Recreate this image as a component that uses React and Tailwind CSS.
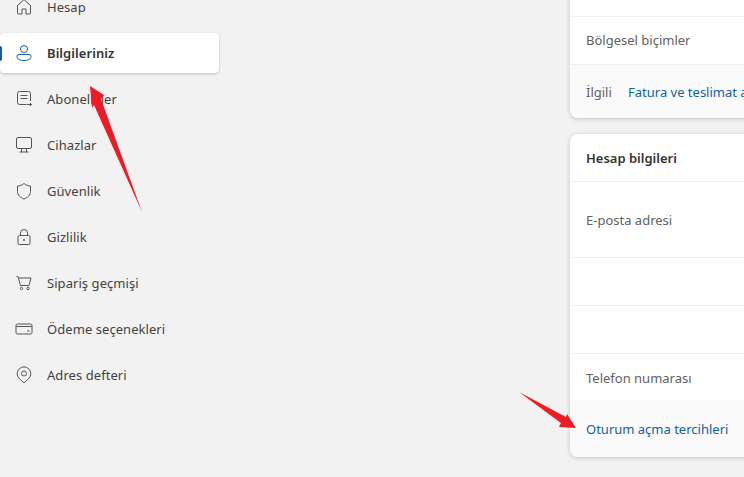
const navItems = [
  { label: 'Hesap', icon: HomeIcon },
  { label: 'Bilgileriniz', icon: PersonIcon, active: true },
  { label: 'Abonelikler', icon: SubsIcon },
  { label: 'Cihazlar', icon: DeviceIcon },
  { label: 'Güvenlik', icon: ShieldIcon },
  { label: 'Gizlilik', icon: LockIcon },
  { label: 'Sipariş geçmişi', icon: CartIcon },
  { label: 'Ödeme seçenekleri', icon: CardIcon },
  { label: 'Adres defteri', icon: PinIcon },
];

function Svg({ children, className = 'text-[#555555]' }) {
  return (
    <svg width="18" height="18" viewBox="0 0 18 18" fill="none" stroke="currentColor" strokeWidth="1" className={className}>
      {children}
    </svg>
  );
}

function HomeIcon() {
  return <Svg><path d="M2.500 7.500 9 1.500l6.500 6V15a1 1 0 0 1-1 1h-3.500v-5H7v5H3.500a1 1 0 0 1-1-1z" strokeLinejoin="round" /></Svg>;
}
function PersonIcon() {
  return <Svg className="text-[#115ea3]"><circle cx="9" cy="5" r="3.500" /><path d="M4 10.500h10a2 2 0 0 1 2 2c0 2.500-3 4-7 4s-7-1.500-7-4a2 2 0 0 1 2-2z" /></Svg>;
}
function SubsIcon() {
  return <Svg><path d="M15.500 11V3.500a2 2 0 0 0-2-2h-9a2 2 0 0 0-2 2v9a2 2 0 0 0 2 2H11" /><path d="M5.500 5.500h7M5.500 8.500h7M11.500 14.500h5M15 13l1.500 1.500L15 16" /></Svg>;
}
function DeviceIcon() {
  return <Svg><rect x="1.500" y="1.500" width="15" height="11" rx="1.500" /><path d="M6.500 12.500v3.500M11.500 12.500v3.500M4.500 16h9" /></Svg>;
}
function ShieldIcon() {
  return <Svg><path d="M9 1.500c2 1.600 4 2.400 6.500 2.500v5.500c0 3.500-2.500 6-6.500 7.500-4-1.500-6.500-4-6.500-7.500V4C5 3.900 7 3.100 9 1.500z" strokeLinejoin="round" /></Svg>;
}
function LockIcon() {
  return <Svg><rect x="3" y="7.500" width="12" height="9" rx="1.500" /><path d="M5.500 7.500V5a3.500 3.500 0 0 1 7 0v2.500" /><circle cx="9" cy="12" r="1" fill="currentColor" stroke="none" /></Svg>;
}
function CartIcon() {
  return <Svg><path d="M1.500 2.500h1.500l2.500 9h8.500l2-7.500H3.500" strokeLinejoin="round" /><circle cx="6.500" cy="14.500" r="1.200" /><circle cx="13" cy="14.500" r="1.200" /></Svg>;
}
function CardIcon() {
  return <Svg><rect x="1" y="4" width="16" height="10" rx="1.500" /><path d="M1 6.500h16M12 11h2.500" /></Svg>;
}
function PinIcon() {
  return <Svg><path d="M9 17 4.200 12.500a6.800 6.800 0 1 1 9.600 0z" strokeLinejoin="round" /><circle cx="9" cy="7.500" r="2.500" /></Svg>;
}

function NavItem({ label, icon: Icon, active }) {
  return (
    <div className={`relative flex items-center h-10 mb-[6px] w-[219px] rounded-[4px] ${active ? 'bg-white shadow-[0_1px_3px_rgba(0,0,0,0.2)]' : ''}`}>
      {active && <span className="absolute left-0 top-[13px] w-[2px] h-[15px] bg-[#115ea3] rounded-r" />}
      <span className="w-[47px] pl-[15px] flex items-center"><Icon /></span>
      <span className={`text-[13px] tracking-[0.06px] mt-[2px] ${active ? 'font-semibold text-[#333333]' : 'text-[#424242]'}`}>{label}</span>
    </div>
  );
}

function Row({ h, children, pad = '' }) {
  return (
    <div className={`flex items-center pl-4 text-[13px] text-[#616161] border-b border-[#f0f0f0] ${pad} ${h}`}>
      {children}
    </div>
  );
}

export default function App() {
  return (
    <div className="relative h-[477px] w-[744px] overflow-hidden bg-[#f2f2f2] flex font-['Noto_Sans','Open_Sans',sans-serif]">
      <nav className="w-[570px] shrink-0 -mt-[13px]">
        {navItems.map(item => <NavItem key={item.label} {...item} />)}
      </nav>

      <main className="flex-1 -mt-[31px] min-w-0">
        <section className="bg-white rounded-lg shadow-[0_1px_4px_rgba(0,0,0,0.2)] overflow-hidden mr-[-12px]">
          <Row h="h-[48px]" />
          <Row h="h-[48px]">Bölgesel biçimler</Row>
          <div className="h-[53px] pt-[2px] bg-[#fafafa] flex items-center pl-4 text-[13px] whitespace-nowrap">
            <span className="text-[#616161] w-[42px] shrink-0">İlgili</span>
            <span className="text-[#0f62a0]">Fatura ve teslimat adresleri</span>
          </div>
        </section>

        <section className="mt-4 bg-white rounded-lg shadow-[0_1px_4px_rgba(0,0,0,0.2)] overflow-hidden mr-[-12px]">
          <Row h="h-[48px]" pad="pt-[2px]"><span className="font-semibold text-[#333333]">Hesap bilgileri</span></Row>
          <Row h="h-[76px]" pad="pt-[2px]">E-posta adresi</Row>
          <Row h="h-[48px]" />
          <Row h="h-[48px]" />
          <div className="h-[46px] pt-[4px] flex items-center pl-4 text-[13px] text-[#616161]">Telefon numarası</div>
          <div className="h-[57px] pt-[2px] bg-[#fafafa] flex items-center pl-4 text-[13px] text-[#0f62a0]">Oturum açma tercihleri</div>
        </section>
      </main>

      {/* annotation arrows */}
      <svg className="absolute left-0 top-0 pointer-events-none" width="744" height="477" fill="#ed1c24">
        <polygon points="90,86 104,95 101,99 142,212 94,105 92,108" />
        <polygon points="576,428 559,427 561,423 519,392 566,417 567,414" />
      </svg>
    </div>
  );
}
